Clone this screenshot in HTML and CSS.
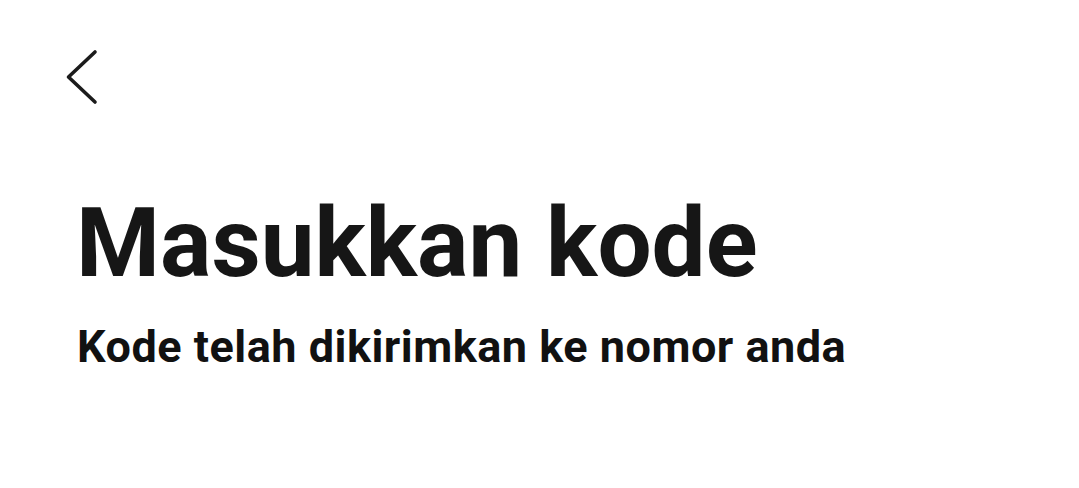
FILE: index.html
```html
<!DOCTYPE html>
<html lang="id">
<head>
<meta charset="utf-8">
<link rel="stylesheet" href="styles.css">
</head>
<body>
<div class="screen">
  <header class="topbar">
    <button class="back" aria-label="Kembali">
      <svg width="34" height="60" viewBox="0 0 34 60"><path d="M31 5 L4.5 30 L31 55" fill="none" stroke="#1b1b1b" stroke-width="3.6" stroke-linecap="round" stroke-linejoin="round"/></svg>
    </button>
  </header>
  <main class="content">
    <h1 class="title">Masukkan kode</h1>
    <p class="subtitle">Kode telah dikirimkan ke nomor anda</p>
  </main>
</div>
</body>
</html>
```
FILE: styles.css
```css
html, body { margin: 0; padding: 0; background: #ffffff; }
body { font-family: Roboto, "Noto Sans", sans-serif; color: #161616; }
.screen { width: 1079px; height: 488px; overflow: hidden; }
.topbar { padding: 47px 0 0 64px; height: 60px; }
.back { border: 0; background: none; padding: 0; display: block; }
.back svg { display: block; }
.content { padding: 81px 0 0 76px; }
.title { margin: 0; font-size: 96px; font-weight: 700; line-height: 110px; letter-spacing: 0; }
.subtitle { margin: 25px 0 0 1px; font-size: 45px; font-weight: 700; line-height: 48px; letter-spacing: 0.5px; color: #111111; }
```
